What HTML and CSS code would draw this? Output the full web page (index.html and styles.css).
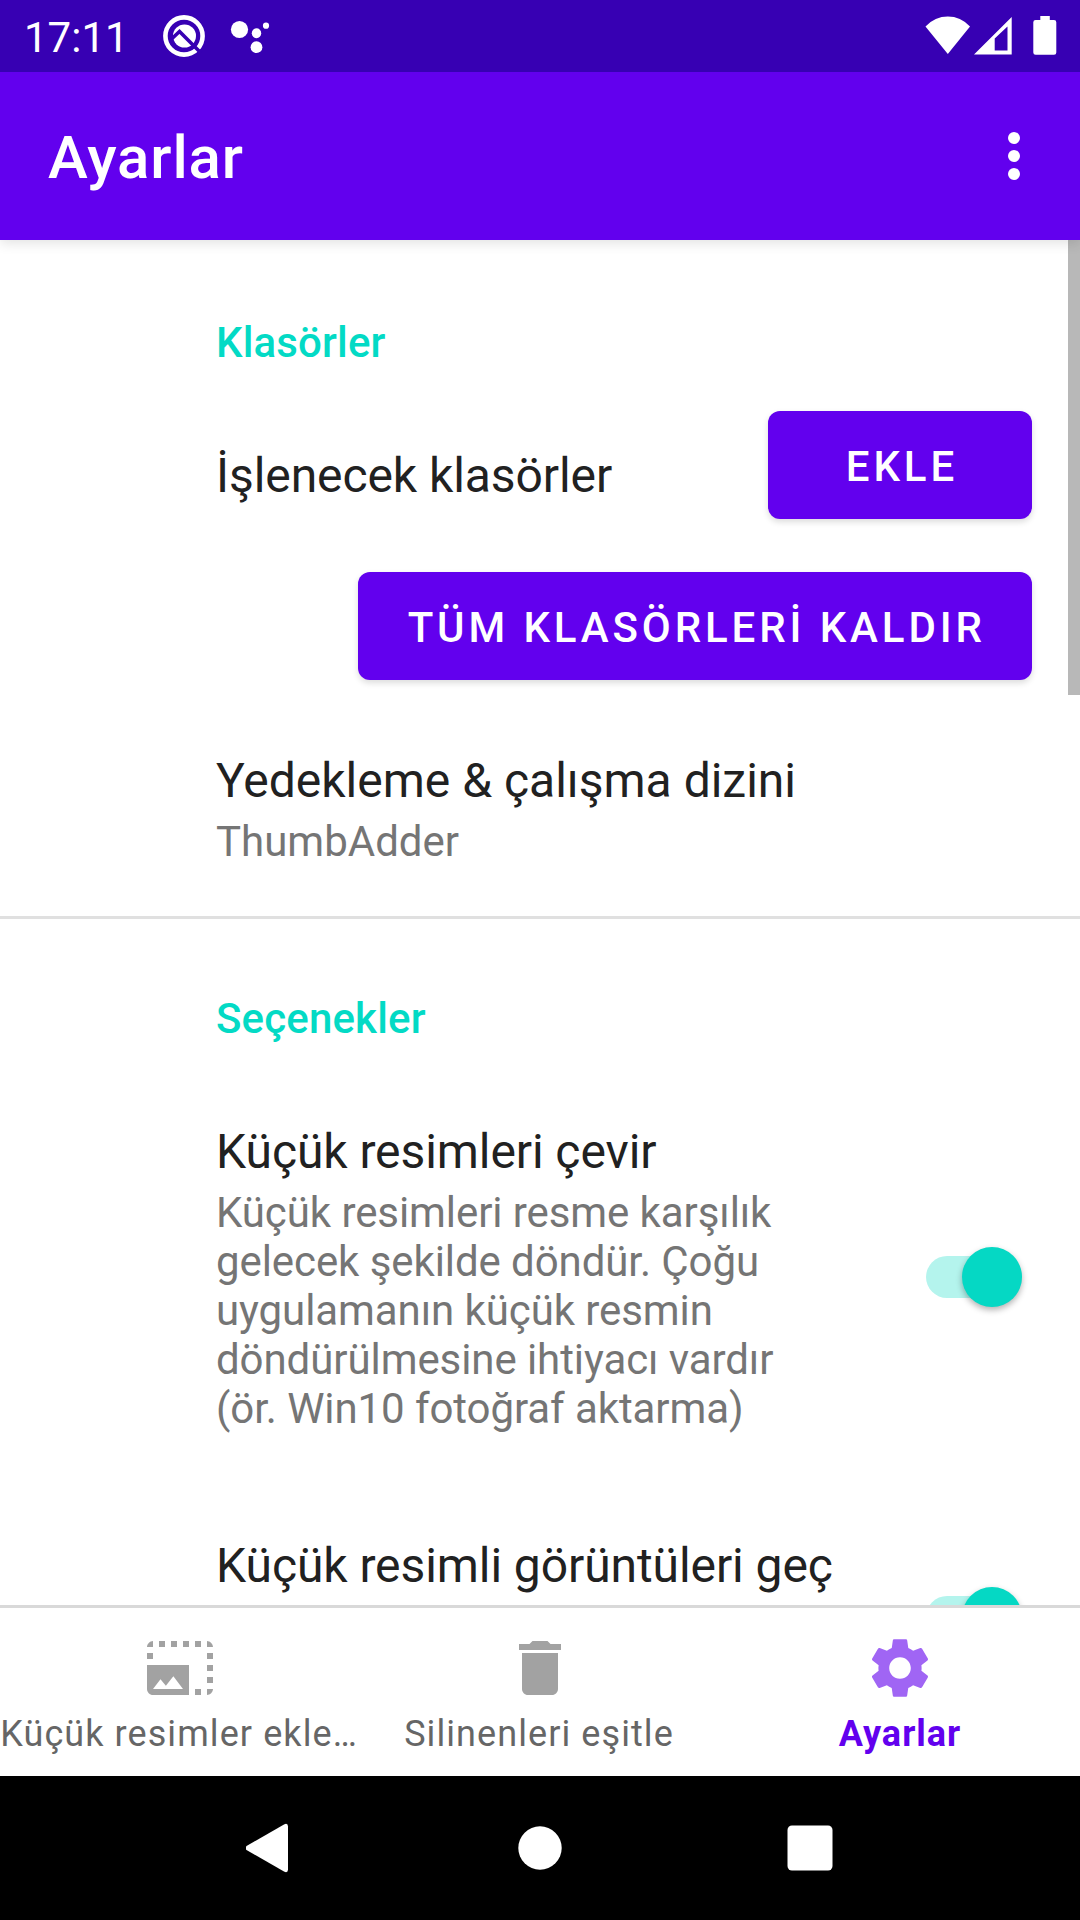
FILE: index.html
```html
<!DOCTYPE html>
<html lang="tr">
<head>
<meta charset="utf-8">
<title>Ayarlar</title>
<link rel="stylesheet" href="styles.css">
</head>
<body>
<div class="screen">
  <header class="status">
    <span class="clock">17:11</span>
    <svg class="status-q" width="44" height="44" viewBox="0 0 44 44">
      <circle cx="22" cy="22" r="18.6" fill="none" stroke="#fff" stroke-width="4.6"/>
      <circle cx="22.5" cy="22" r="11.5" fill="#fff"/>
      <path d="M9 25.500L17.500 17.500L39 39" fill="none" stroke="#3700b3" stroke-width="3.600"/>
    </svg>
    <svg class="status-dots" width="40" height="36" viewBox="0 0 40 36" fill="#fff">
      <circle cx="9.500" cy="11.500" r="8.600"/>
      <ellipse cx="26.500" cy="15.200" rx="4.700" ry="5"/>
      <circle cx="26.500" cy="29.200" r="5.900"/>
      <circle cx="36" cy="7.700" r="3.100"/>
    </svg>
    <div class="status-right">
      <svg width="46" height="40" viewBox="0 0 46 40" fill="#fff"><path d="M.5 10.500Q10 .6 22.800 .6T45 10.500L22.800 38Z"/></svg>
      <svg width="38" height="40" viewBox="0 0 38 40" fill="#fff"><path fill-rule="evenodd" d="M0 38.500L37.700 1V38.500ZM20.700 22.500V34.500H33.500V10.500Z"/></svg>
      <svg class="battery" width="24" height="40" viewBox="0 0 24 40" fill="#fff"><path d="M7.300 4V0H16.800V4H21Q23.300 4 23.300 6.300V36.400Q23.300 38.700 21 38.700H2.600Q.3 38.700 .3 36.400V6.300Q.3 4 2.600 4Z"/></svg>
    </div>
  </header>

  <div class="appbar">
    <h1 class="appbar-title">Ayarlar</h1>
    <svg class="overflow" width="72" height="72" viewBox="0 0 24 24" fill="#fff"><circle cx="12" cy="6" r="2"/><circle cx="12" cy="12" r="2"/><circle cx="12" cy="18" r="2"/></svg>
  </div>

  <main class="content">
    <section class="group">
      <h2 class="category">Klasörler</h2>
      <div class="folder-row">
        <span class="pref-title folder-label">İşlenecek klasörler</span>
        <button class="button">EKLE</button>
      </div>
      <div class="remove-row"><button class="button">TÜM KLASÖRLERİ KALDIR</button></div>
      <div class="pref backup">
        <div class="pref-title">Yedekleme &amp; çalışma dizini</div>
        <div class="pref-summary">ThumbAdder</div>
      </div>
    </section>
    <section class="group divided">
      <h2 class="category">Seçenekler</h2>
      <div class="switch-pref">
        <div class="pref">
          <div class="pref-title">Küçük resimleri çevir</div>
          <div class="pref-summary">Küçük resimleri resme karşılık<br>gelecek şekilde döndür. Çoğu<br>uygulamanın küçük resmin<br>döndürülmesine ihtiyacı vardır<br>(ör. Win10 fotoğraf aktarma)</div>
        </div>
        <div class="switch rotate"><span class="thumb"></span></div>
      </div>
      <div class="switch-pref skip">
        <div class="pref"><div class="pref-title">Küçük resimli görüntüleri geç</div></div>
        <div class="switch"><span class="thumb"></span></div>
      </div>
    </section>
    <div class="scrollbar"></div>
  </main>

  <nav class="tabs">
    <div class="tab">
      <svg class="tab-icon" viewBox="0 0 24 24"><path d="M21 15h2v2h-2v-2zm0-4h2v2h-2v-2zm2 8h-2v2c1 0 2-1 2-2zM13 3h2v2h-2V3zm8 4h2v2h-2V7zm0-4v2h2c0-1-1-2-2-2zM1 7h2v2H1V7zm16-4h2v2h-2V3zm0 16h2v2h-2v-2zM3 3C2 3 1 4 1 5h2V3zm6 0h2v2H9V3zM5 3h2v2H5V3zm-4 8v8c0 1.100.9 2 2 2h12V11H1zm2 8l2.500-3.210 1.790 2.150 2.500-3.220L13 19H3z"/></svg>
      <span class="tab-label">Küçük resimler ekle…</span>
    </div>
    <div class="tab">
      <svg class="tab-icon" viewBox="0 0 24 24"><path d="M6 19c0 1.100.9 2 2 2h8c1.100 0 2-.9 2-2V7H6v12zM19 4h-3.500l-1-1h-5l-1 1H5v2h14V4z"/></svg>
      <span class="tab-label">Silinenleri eşitle</span>
    </div>
    <div class="tab active">
      <svg class="tab-icon" viewBox="0 0 24 24"><path d="M19.14,12.94c0.04-0.3,0.06-0.61,0.06-0.94c0-0.32-0.02-0.64-0.07-0.94l2.03-1.58c0.18-0.14,0.23-0.41,0.12-0.61l-1.92-3.32c-0.12-0.22-0.37-0.29-0.59-0.22l-2.39,0.96c-0.5-0.38-1.03-0.7-1.62-0.94L14.4,2.81c-0.04-0.24-0.24-0.41-0.48-0.41h-3.84c-0.24,0-0.43,0.17-0.47,0.41L9.25,5.35C8.66,5.59,8.12,5.92,7.63,6.29L5.24,5.33c-0.22-0.08-0.47,0-0.59,0.22L2.74,8.87C2.62,9.08,2.66,9.34,2.86,9.48l2.03,1.58C4.84,11.36,4.8,11.69,4.8,12s0.02,0.64,0.07,0.94l-2.03,1.58c-0.18,0.14-0.23,0.41-0.12,0.61l1.92,3.32c0.12,0.22,0.37,0.29,0.59,0.22l2.39-0.96c0.5,0.38,1.03,0.7,1.62,0.94l0.36,2.54c0.05,0.24,0.24,0.41,0.48,0.41h3.84c0.24,0,0.44-0.17,0.47-0.41l0.36-2.54c0.59-0.24,1.13-0.56,1.62-0.94l2.39,0.96c0.22,0.08,0.47,0,0.59-0.22l1.92-3.32c0.12-0.22,0.07-0.47-0.12-0.61L19.14,12.94z M12,15.6c-1.98,0-3.6-1.62-3.6-3.6s1.62-3.6,3.6-3.6s3.6,1.62,3.6,3.6S13.98,15.6,12,15.6z"/></svg>
      <span class="tab-label">Ayarlar</span>
    </div>
  </nav>

  <footer class="system-nav">
    <svg width="48" height="52" viewBox="0 0 48 52" fill="#fff"><path d="M.5 24Q-1 26 .5 28L38 49.600Q42 51.300 42 47.500V4.500Q42 .7 38 2.400Z"/></svg>
    <svg width="48" height="48" viewBox="0 0 48 48" fill="#fff"><circle cx="24" cy="24" r="21.700"/></svg>
    <svg width="48" height="48" viewBox="0 0 48 48" fill="#fff"><rect x="1.500" y="1.500" width="45" height="45" rx="4.500"/></svg>
  </footer>
</div>
</body>
</html>
```
FILE: styles.css
```css
* { box-sizing: border-box; }
body { margin: 0; font-family: Roboto, "Noto Sans", sans-serif; background: #fff; }
svg { display: block; flex: none; }
h1, h2 { margin: 0; font-weight: 500; }

.screen { width: 1080px; height: 1920px; display: flex; flex-direction: column; overflow: hidden; }

.status { height: 72px; flex: none; display: flex; align-items: flex-start; background: #3700b3; padding: 0 23px 0 24px; z-index: 2; }
.clock { width: 138px; padding-top: 13px; color: #fff; font-size: 42px; line-height: 49px; }
.status-q { margin-top: 14px; }
.status-dots { margin: 18px 0 0 24px; }
.status-right { margin-left: auto; padding-top: 16px; display: flex; gap: 3px; }
.battery { margin-left: 18px; }

.appbar { height: 168px; flex: none; display: flex; align-items: center; justify-content: space-between; padding: 0 30px 0 48px; background: #6200ee; box-shadow: 0 3px 12px rgba(0, 0, 0, .12); z-index: 1; }
.appbar-title { color: #fff; font-size: 60px; line-height: 70px; padding-top: 4px; letter-spacing: .9px; }

.content { position: relative; flex: 1; min-height: 0; overflow: hidden; }
.group { padding: 78px 48px 50px 216px; }
.divided { border-top: 3px solid #e0e0e0; padding-top: 75px; }
.category { color: #03dac5; font-size: 42px; line-height: 49px; letter-spacing: .15px; }
.pref-title { color: #212121; font-size: 48px; line-height: 56px; letter-spacing: -.08px; white-space: nowrap; }
.pref-summary { margin-top: 8px; color: #757575; font-size: 42px; line-height: 49px; letter-spacing: -.08px; white-space: nowrap; }
.folder-row { display: flex; justify-content: space-between; padding-top: 44px; }
.folder-label { padding-top: 37px; }
.remove-row { display: flex; justify-content: flex-end; padding-top: 53px; }
.button { min-width: 264px; height: 108px; padding: 2px 46.2px 0 50px; border: 0; border-radius: 12px; background: #6200ee; color: #fff; font: 500 42px/49px Roboto, sans-serif; letter-spacing: 3.89px; white-space: nowrap; box-shadow: 0 3px 6px rgba(0, 0, 0, .14); }
.backup { padding-top: 73px; }
.backup .pref-title, .backup .pref-summary { letter-spacing: 0; }

.switch-pref { display: flex; justify-content: space-between; padding-top: 81px; }
.skip { padding-top: 105px; }
.switch { flex: none; width: 96px; height: 42px; margin: 58px 10px 0 0; border-radius: 21px; background: #b4f4ed; display: flex; align-items: center; justify-content: flex-end; }
.rotate { margin-top: 132px; }
.thumb { width: 60px; height: 60px; flex: none; border-radius: 50%; background: #05d8c4; box-shadow: 0 3px 6px rgba(0, 0, 0, .3); }
.scrollbar { position: absolute; top: 0; right: 0; width: 12px; height: 455px; background: #b8b8b8; }

.tabs { height: 171px; flex: none; display: grid; grid-template-columns: repeat(3, 1fr); border-top: 3px solid #d9d9d9; background: #fff; }
.tab { display: flex; flex-direction: column; align-items: center; padding-top: 24px; color: #666; }
.tab-icon { width: 72px; height: 72px; fill: currentColor; opacity: .6; }
.tab-label { margin: 9px 2px 0 0; font-size: 36px; line-height: 42px; letter-spacing: 1.08px; white-space: nowrap; }
.active { color: #6200ee; }
.active .tab-label { margin-right: 0; font-weight: 700; letter-spacing: 1px; }

.system-nav { height: 144px; flex: none; display: flex; align-items: center; justify-content: center; gap: 222px; background: #000; }
```
